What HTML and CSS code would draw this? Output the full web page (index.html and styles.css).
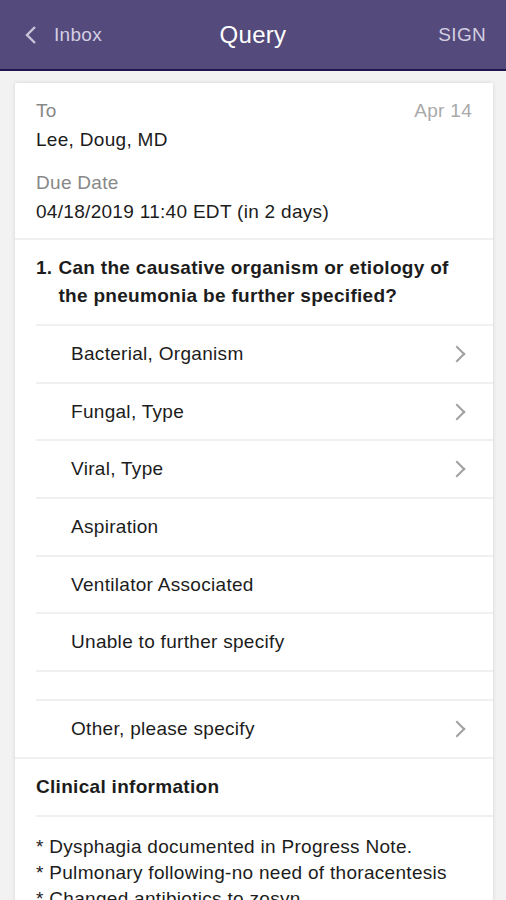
FILE: index.html
```html
<!DOCTYPE html>
<html lang="en">
<head>
  <meta charset="UTF-8">
  <meta name="viewport" content="width=device-width, initial-scale=1.0">
  <title>Query</title>
  <link rel="stylesheet" href="styles.css">
</head>
<body>
  <div class="top-bar">
    <div class="back">
      <svg width="14" height="20" viewBox="0 0 14 20"><path d="M11 2 L3 10 L11 18" fill="none" stroke="#c9c5d9" stroke-width="2.4"/></svg>
      <span>Inbox</span>
    </div>
    <div class="title">Query</div>
    <div class="sign">SIGN</div>
  </div>

  <div class="card">
    <div class="meta">
      <div class="meta-row">
        <span class="label">To</span>
        <span class="date">Apr 14</span>
      </div>
      <div class="value">Lee, Doug, MD</div>
      <div class="label due">Due Date</div>
      <div class="value">04/18/2019 11:40 EDT (in 2 days)</div>
    </div>

    <div class="question">
      <span class="num">1.</span>
      <span>Can the causative organism or etiology of the pneumonia be further specified?</span>
    </div>

    <div class="options">
      <div class="option">Bacterial, Organism <span class="chev"></span></div>
      <div class="option">Fungal, Type <span class="chev"></span></div>
      <div class="option">Viral, Type <span class="chev"></span></div>
      <div class="option">Aspiration</div>
      <div class="option">Ventilator Associated</div>
      <div class="option">Unable to further specify</div>
      <div class="option blank"></div>
      <div class="option">Other, please specify <span class="chev"></span></div>
    </div>

    <div class="section-title">Clinical information</div>
    <div class="notes">
      <p>* Dysphagia documented in Progress Note.</p>
      <p>* Pulmonary following-no need of thoracentesis</p>
      <p>* Changed antibiotics to zosyn</p>
    </div>
  </div>
</body>
</html>
```

FILE: styles.css
```css
body {
  margin: 0;
  font-family: "Liberation Sans", Arial, sans-serif;
  background: #f2f2f2;
  color: #1c1c1c;
  height: 900px;
  overflow: hidden;
  letter-spacing: 0.3px;
}

.top-bar {
  height: 69px;
  background: #544a7b;
  border-bottom: 2px solid #1f1650;
  display: flex;
  align-items: center;
  justify-content: space-between;
  padding: 0 20px 0 24px;
  color: #d3cfe2;
  position: relative;
}

.back {
  display: flex;
  align-items: center;
  gap: 16px;
  font-size: 19px;
}

.title {
  position: absolute;
  left: 0;
  right: 0;
  text-align: center;
  color: #ffffff;
  font-size: 24px;
  pointer-events: none;
}

.sign {
  font-size: 19px;
}

.card {
  margin: 12px 13px 0 15px;
  background: #ffffff;
  box-shadow: 0 0 4px rgba(0,0,0,0.12);
}

.meta {
  padding: 14px 21px 12px 21px;
  border-bottom: 2px solid #f0f0f0;
}

.meta-row {
  display: flex;
  justify-content: space-between;
}

.label {
  color: #888888;
  font-size: 19px;
  line-height: 28px;
}

.date {
  color: #a9a9a9;
  font-size: 19px;
  line-height: 28px;
}

.due {
  margin-top: 15px;
}

.value {
  font-size: 19px;
  line-height: 29px;
}

.question {
  display: flex;
  gap: 6px;
  margin-left: 21px;
  padding: 14px 30px 14px 0;
  font-weight: bold;
  font-size: 19px;
  line-height: 28px;
  border-bottom: 2px solid #f0f0f0;
}

.options {
  margin-left: 21px;
}

.option {
  height: 55.7px;
  display: flex;
  align-items: center;
  justify-content: space-between;
  padding: 0 30px 0 35px;
  font-size: 19px;
  border-bottom: 2px solid #f0f0f0;
}

.option.blank {
  height: 27px;
}

.option:last-child {
  border-bottom: none;
}

.chev {
  width: 10px;
  height: 10px;
  border-top: 2px solid #a0a0a0;
  border-right: 2px solid #a0a0a0;
  transform: rotate(45deg);
}

.section-title {
  border-top: 2px solid #f0f0f0;
  padding: 14px 21px 14px 21px;
  font-weight: bold;
  font-size: 19px;
  line-height: 28px;
}

.notes {
  margin-left: 21px;
  border-top: 2px solid #f0f0f0;
  padding-top: 17px;
  font-size: 19px;
}

.notes p {
  margin: 0;
  line-height: 26px;
}
```
